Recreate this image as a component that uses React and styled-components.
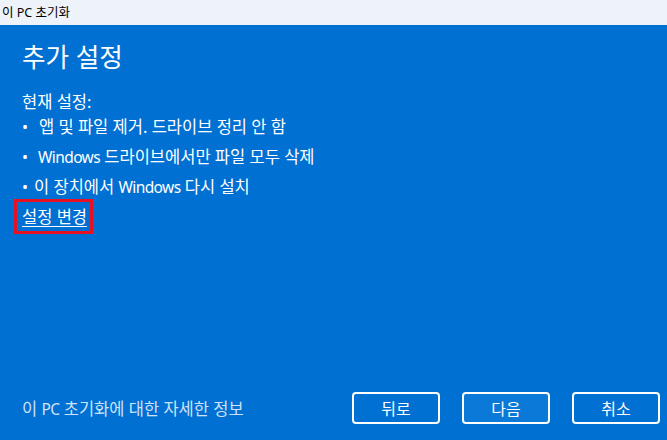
import React from "react";
import styled, { createGlobalStyle } from "styled-components";

const Global = createGlobalStyle`
  html, body { margin: 0; padding: 0; }
  body { font-family: "Noto Sans", "Noto Sans CJK KR", sans-serif; }
  #root { width: 667px; height: 440px; }
`;

const Window = styled.div`
  width: 667px;
  height: 440px;
  display: flex;
  flex-direction: column;
  overflow: hidden;
`;

const TitleBar = styled.div`
  height: 25px;
  background: #eef3f9;
  color: #000;
  font-size: 12.5px;
  line-height: 25px;
  padding-left: 2px;
  flex: none;
`;

const Body = styled.div`
  flex: 1;
  background: #0070d3;
  color: #fff;
  display: flex;
  flex-direction: column;
  padding: 0 7px 0 22px;
`;

const Heading = styled.h1`
  margin: 15px 0 0;
  font-size: 25.6px;
  font-weight: 400;
  line-height: 36px;
`;

const Text = styled.div`
  font-size: 16.5px;
`;

const Latin = styled.span`
  font-size: 15.5px;
  letter-spacing: -0.6px;
`;

const Label = styled(Text)`
  margin-top: 16px;
  line-height: 20px;
`;

const List = styled.ul`
  list-style: none;
  margin: 0;
  padding: 0;
`;

const Item = styled(Text).attrs({ as: "li" })`
  line-height: 30px;
  display: flex;
  white-space: pre;
`;

const Bullet = styled.span`
  width: ${(p) => p.$w}px;
  flex: none;
  font-size: 16px;
`;

const LinkBox = styled.div`
  align-self: flex-start;
  margin: -3px 0 0 -8px;
  border: 3px solid #e81123;
  padding: 3px 3px 2px 5px;
`;

const Link = styled(Text).attrs({ as: "span" })`
  line-height: 24px;
  text-decoration: underline;
  text-underline-offset: 3px;
  color: #fff;
`;

const Spacer = styled.div`
  flex: 1;
`;

const Footer = styled.div`
  display: flex;
  align-items: center;
  height: 32px;
  margin-bottom: 16px;
`;

const Info = styled(Text).attrs({ as: "span" })`
  color: #cfe2f6;
  flex: 1;
`;

const Buttons = styled.div`
  display: flex;
  gap: 22px;
`;

const Button = styled.button`
  width: 88px;
  height: 32px;
  box-sizing: border-box;
  border: 2px solid #fff;
  border-radius: 4px;
  background: ${(p) => (p.$focus ? "#0a79d8" : "transparent")};
  color: #fff;
  font-family: inherit;
  font-size: 16px;
  padding: 0;
`;

export default function App() {
  return (
    <Window>
      <Global />
      <TitleBar>이 PC 초기화</TitleBar>
      <Body>
        <Heading>추가 설정</Heading>
        <Label>현재 설정:</Label>
        <List>
          <Item><Bullet $w={17}>•</Bullet>앱 및 파일 제거. 드라이브 정리 안 함</Item>
          <Item><Bullet $w={16}>•</Bullet><Latin>Windows</Latin> 드라이브에서만 파일 모두 삭제</Item>
          <Item><Bullet $w={12}>•</Bullet>이 장치에서 <Latin>Windows</Latin> 다시 설치</Item>
        </List>
        <LinkBox><Link>설정 변경</Link></LinkBox>
        <Spacer />
        <Footer>
          <Info>이 <Latin>PC</Latin> 초기화에 대한 자세한 정보</Info>
          <Buttons>
            <Button>뒤로</Button>
            <Button $focus>다음</Button>
            <Button>취소</Button>
          </Buttons>
        </Footer>
      </Body>
    </Window>
  );
}
